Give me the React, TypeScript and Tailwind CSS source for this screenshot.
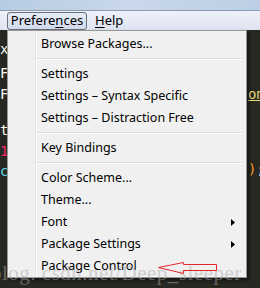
import React from "react";

type Item = { label: string; sub?: boolean } | "sep";

const items: Item[] = [
  { label: "Browse Packages..." },
  "sep",
  { label: "Settings" },
  { label: "Settings – Syntax Specific" },
  { label: "Settings – Distraction Free" },
  "sep",
  { label: "Key Bindings" },
  "sep",
  { label: "Color Scheme..." },
  { label: "Theme..." },
  { label: "Font", sub: true },
  { label: "Package Settings", sub: true },
  { label: "Package Control" },
];

function SubArrow() {
  return (
    <svg width="4" height="7" viewBox="0 0 4 7" className="ml-auto mr-[11px]">
      <path d="M0 0 L4 3.5 L0 7 Z" fill="#000" />
    </svg>
  );
}

function Menu() {
  return (
    <div className="absolute left-[7px] top-[30px] w-[240px] h-[248px] border border-[#979797] bg-[#f0f0f0] shadow-[2px_2px_3px_rgba(0,0,0,0.55)] pt-[2px]">
      {/* icon gutter */}
      <div className="absolute left-[27px] top-[1px] bottom-[1px] w-[1px] bg-[#e2e3e3]" />
      <div className="absolute left-[28px] top-[1px] bottom-[1px] w-[1px] bg-white" />
      {items.map((it, i) =>
        it === "sep" ? (
          <div key={i} className="relative h-[8px] flex flex-col justify-center ml-[28px] mr-[2px]">
            <div className="h-[1px] bg-[#e0e0e0]" />
            <div className="h-[1px] bg-white" />
          </div>
        ) : (
          <div key={i} className="relative h-[22px] flex items-center pl-[33px] text-[12.5px] text-black">
            <span>{it.label}</span>
            {it.sub && <SubArrow />}
          </div>
        )
      )}
    </div>
  );
}

export default function App() {
  return (
    <div className="relative w-[260px] h-[288px] overflow-hidden bg-[#272822] font-['Noto_Sans',sans-serif]">
      {/* blurred window title */}
      <div className="h-[10px] bg-gradient-to-r from-[#b7cce2] via-[#c9d8ea] to-[#bccfe4]" />

      {/* menu bar */}
      <div className="h-[20px] flex items-center border-t border-[#8a9ab0] bg-gradient-to-b from-[#eef1f9] to-[#dde3f0] text-[13px] text-black">
        <div className="ml-[7px] h-[18px] w-[80px] flex items-center justify-center rounded-[3px] border border-[#6b717c] bg-gradient-to-b from-[#e6ecf7] to-[#d2dbec]">
          Prefere<span className="underline underline-offset-2">n</span>ces
        </div>
        <div className="ml-[8px]">
          <span className="underline underline-offset-2">H</span>elp
        </div>
      </div>

      {/* editor behind the menu */}
      <div className="flex justify-between text-[14px] font-['DejaVu_Sans_Mono',monospace]">
        <div className="flex flex-col pt-[11px] leading-[16px] text-[#f8f8f2]">
          <div>x,</div>
          <div className="mt-[8px]">Fo</div>
          <div className="mt-[5px]">Fi</div>
          <div className="mt-[20px]">th</div>
          <div className="mt-[5px] text-[#f92672]">1</div>
          <div className="mt-[4px] text-[#66d9ef]">co</div>
        </div>
        <div className="flex flex-col pt-[56px] w-[12px] leading-[16px]">
          <div className="text-[#e6db74] underline">om</div>
          <div className="mt-[59px] text-[#f8f8f2]">
            <span className="text-[#fd971f]">)</span>;
          </div>
        </div>
      </div>

      <Menu />

      {/* watermark */}
      <div className="absolute left-[-9px] top-[258px] text-[21px] tracking-[0.5px] text-[rgba(170,170,170,0.5)] font-['Liberation_Serif',serif] whitespace-nowrap">
        blog. csdn.net/Deep_sleeper
      </div>

      {/* red arrow */}
      <svg className="absolute left-0 top-0" width="260" height="288" viewBox="0 0 260 288">
        <path
          d="M158.5 267.5 L183.5 262.5 L183.5 264.5 L216.5 264.5 L216.5 270.5 L183.5 270.5 L183.5 273.5 Z"
          fill="none"
          stroke="#e8242b"
          strokeWidth="1"
        />
      </svg>
    </div>
  );
}
